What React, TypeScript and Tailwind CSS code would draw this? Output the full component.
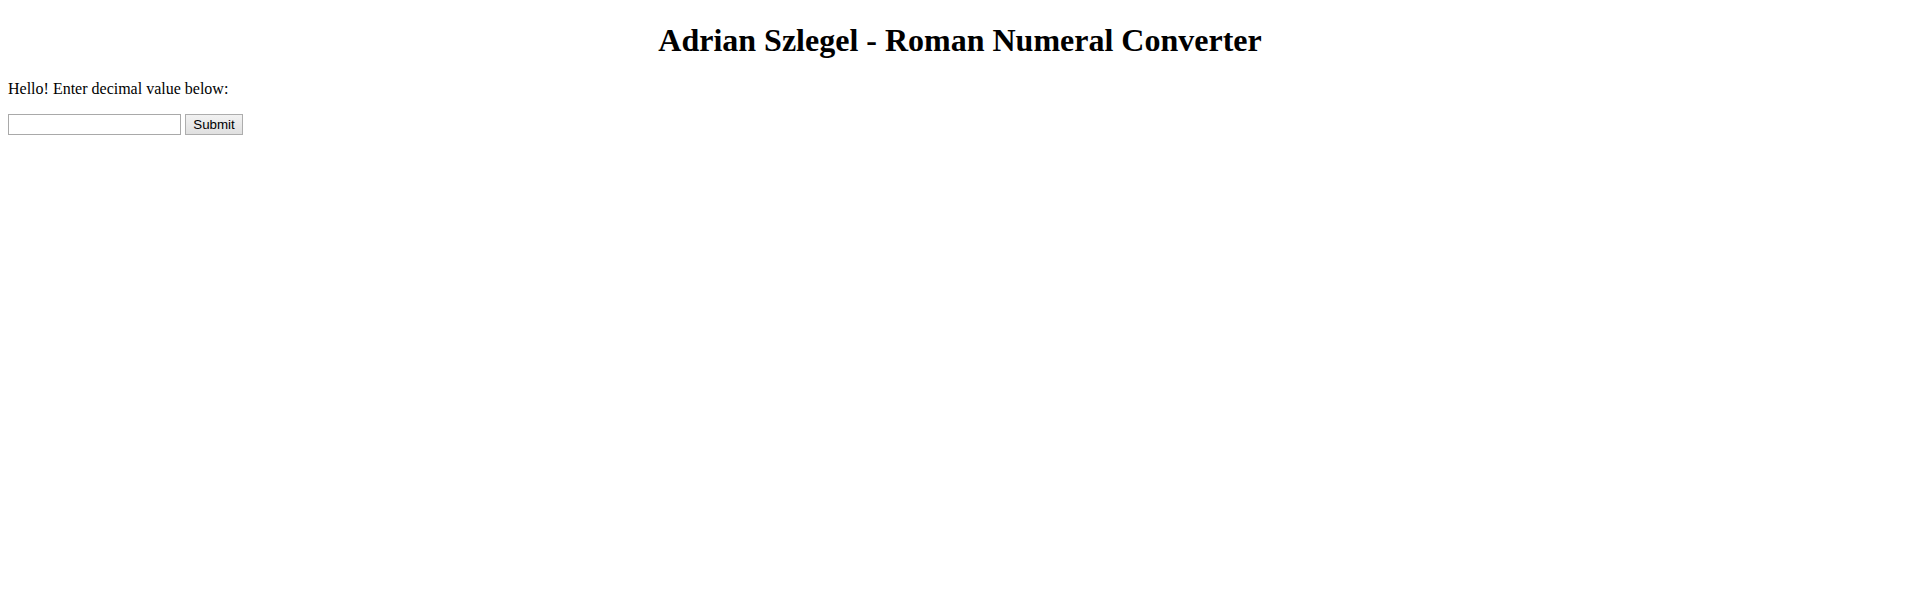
export default function App() {
  return (
    <div className="min-h-[599px] bg-white p-2 font-['Liberation_Serif',serif] text-black">
      <h1 className="mt-[14.44px] mb-[12.44px] text-center text-[32px] leading-[37px] font-bold">
        Adrian Szlegel - Roman Numeral Converter
      </h1>
      <p className="mt-[20.44px] text-base leading-[18px]">Hello! Enter decimal value below:</p>
      <form className="mt-4 flex items-center gap-1" onSubmit={(e) => e.preventDefault()}>
        <input
          type="text"
          className="h-[21px] w-[173px] border border-[#a9a9a9] bg-white px-[2px] font-['Liberation_Sans',sans-serif] text-[13.33px] outline-none"
        />
        <button
          type="submit"
          className="h-[21px] w-[58px] border border-[#adadad] bg-gradient-to-b from-[#f2f2f2] to-[#e0e0e0] font-['Liberation_Sans',sans-serif] text-[13.33px] leading-none text-black"
        >
          Submit
        </button>
      </form>
    </div>
  );
}
